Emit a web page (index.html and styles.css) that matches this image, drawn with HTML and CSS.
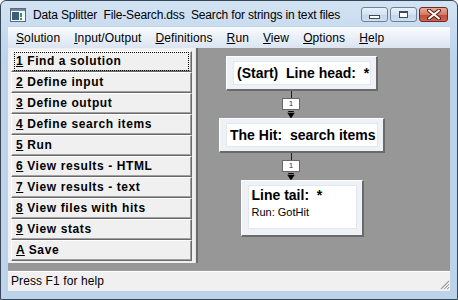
FILE: index.html
```html
<!DOCTYPE html>
<html lang="en">
<head>
  <meta charset="UTF-8">
  <title>Data Splitter</title>
  <link rel="stylesheet" href="styles.css">
</head>
<body>

  <div class="window">
    <div class="titlebar">
      <svg class="app-icon" width="16" height="14" viewBox="0 0 16 14">
        <rect x="0.5" y="0.5" width="15" height="13" fill="#f4f6f8" stroke="#5a6878"/>
        <rect x="1" y="1" width="14" height="2" fill="#6d86a6"/>
        <rect x="2" y="4" width="7" height="8" fill="#3f5b7c"/>
        <rect x="10" y="5" width="2" height="4" fill="#2f9a4a"/>
        <rect x="10" y="10" width="2" height="2" fill="#2f9a4a"/>
      </svg>
      <span class="title">Data Splitter&nbsp; File-Search.dss&nbsp; Search for strings in text files</span>
      <div class="caption-btns">
        <span class="cbtn"><span class="glyph-min"></span></span>
        <span class="cbtn"><span class="glyph-max"></span></span>
        <span class="cbtn close">
          <svg width="16" height="11" viewBox="0 0 16 11">
            <path d="M3 1.5 L13 9.5 M13 1.5 L3 9.5" stroke="#5a1d16" stroke-width="4" stroke-linecap="round"/>
            <path d="M3 1.5 L13 9.5 M13 1.5 L3 9.5" stroke="#ffffff" stroke-width="2" stroke-linecap="round"/>
          </svg>
        </span>
      </div>
    </div>

    <div class="menubar">
      <span class="menu"><u>S</u>olution</span>
      <span class="menu"><u>I</u>nput/Output</span>
      <span class="menu"><u>D</u>efinitions</span>
      <span class="menu"><u>R</u>un</span>
      <span class="menu"><u>V</u>iew</span>
      <span class="menu"><u>O</u>ptions</span>
      <span class="menu"><u>H</u>elp</span>
    </div>

    <div class="client">
      <div class="main">
        <div class="panel">
          <button class="step"><span class="focus-ring"><u>1</u> Find a solution</span></button>
          <button class="step"><span><u>2</u> Define input</span></button>
          <button class="step"><span><u>3</u> Define output</span></button>
          <button class="step"><span><u>4</u> Define search items</span></button>
          <button class="step"><span><u>5</u> Run</span></button>
          <button class="step"><span><u>6</u> View results - HTML</span></button>
          <button class="step"><span><u>7</u> View results - text</span></button>
          <button class="step"><span><u>8</u> View files with hits</span></button>
          <button class="step"><span><u>9</u> View stats</span></button>
          <button class="step"><span><u>A</u> Save</span></button>
        </div>

        <div class="canvas">
          <div class="flow">
            <div class="node node-head">
              <div class="node-inner">(Start)&nbsp; Line head:&nbsp; *</div>
            </div>

            <div class="link">
              <span class="link-line"></span>
              <span class="link-label">1</span>
              <svg class="link-arrow" width="8" height="8" viewBox="0 0 8 8">
                <rect x="1" y="0" width="6" height="1" fill="#000"/>
                <polygon points="0,2 8,2 4,8" fill="#000"/>
              </svg>
            </div>

            <div class="node node-hit">
              <div class="node-inner">The Hit:&nbsp; search items</div>
            </div>

            <div class="link">
              <span class="link-line"></span>
              <span class="link-label">1</span>
              <svg class="link-arrow" width="8" height="8" viewBox="0 0 8 8">
                <rect x="1" y="0" width="6" height="1" fill="#000"/>
                <polygon points="0,2 8,2 4,8" fill="#000"/>
              </svg>
            </div>

            <div class="node node-tail">
              <div class="node-inner">
                <div>Line tail:&nbsp; *</div>
                <div class="node-note">Run: GotHit</div>
              </div>
            </div>
          </div>
        </div>
      </div>

      <div class="statusbar">
        <span>Press F1 for help</span>
        <svg class="grip" width="12" height="12" viewBox="0 0 12 12">
          <path d="M11 3 L3 11 M11 6 L6 11 M11 9 L9 11" stroke="#a0a0a0" stroke-width="1.2"/>
          <path d="M12 4 L4 12 M12 7 L7 12 M12 10 L10 12" stroke="#ffffff" stroke-width="1"/>
        </svg>
      </div>
    </div>
  </div>

</body>
</html>
```

FILE: styles.css
```css
body {
  margin: 0;
  background: #ffffff;
}
.window {
  width: 458px;
  height: 300px;
  box-sizing: border-box;
  border: 1px solid #37475a;
  border-radius: 6px 6px 0 0;
  background: linear-gradient(#d3e3f4, #bcd3ea 60px);
  padding: 0 7px 8px 7px;
  display: flex;
  flex-direction: column;
  font-family: "Liberation Sans", Arial, sans-serif;
}

/* title bar */
.titlebar {
  height: 25px;
  display: flex;
  align-items: center;
  padding-left: 2px;
}
.app-icon {
  margin-right: 7px;
  margin-top: 2px;
}
.title {
  font-size: 12px;
  letter-spacing: -0.15px;
  color: #000;
  margin-top: 2px;
  white-space: nowrap;
}
.caption-btns {
  margin-left: auto;
  display: flex;
  gap: 2px;
  margin-top: 1px;
  margin-right: 2px;
}
.cbtn {
  width: 27px;
  height: 15px;
  box-sizing: border-box;
  border: 1px solid #6f8197;
  border-radius: 3px;
  background: linear-gradient(#e9f1fa, #d3e1f1 50%, #c3d5ea 51%, #cfdff0);
  display: flex;
  align-items: center;
  justify-content: center;
}
.cbtn.close {
  width: 29px;
  border-color: #6b2b22;
  background: linear-gradient(#e9a996, #d47a66 50%, #c14a38 51%, #d0654f);
}
.glyph-min {
  width: 9px;
  height: 2px;
  border: 1px solid #3d4b5c;
  background: #fff;
  margin-top: 5px;
}
.glyph-max {
  width: 7px;
  height: 4px;
  border: 1px solid #3d4b5c;
  border-top-width: 2px;
  background: #fff;
}

/* menu */
.menubar {
  height: 21px;
  display: flex;
  align-items: center;
  background: linear-gradient(#fafcfe, #e6edf6 60%, #dbe4f0);
  border-top: 1px solid #c6d3e2;
  padding-left: 1px;
}
.menu {
  font-size: 12px;
  letter-spacing: 0.1px;
  color: #000;
  padding: 0 7px;
}

/* client area */
.client {
  flex: 1;
  display: flex;
  flex-direction: column;
}
.main {
  flex: 1;
  display: flex;
  background: #979797;
}
.panel {
  width: 184px;
  align-self: flex-start;
  background: #f0f0f0;
  padding: 3px 0 2px 3px;
  border-right: 1px solid #e3e3e3;
  box-shadow: 2px 0 0 #6c6c6c;
  margin-right: 2px;
  display: flex;
  flex-direction: column;
}
.step {
  height: 21px;
  width: 181px;
  box-sizing: border-box;
  margin: 0;
  padding: 0 0 0 3px;
  background: #f0f0f0;
  border: 1px solid;
  border-color: #ffffff #696969 #696969 #ffffff;
  box-shadow: inset -1px -1px 0 #a0a0a0;
  text-align: left;
  font-family: "Liberation Sans", Arial, sans-serif;
  font-weight: bold;
  font-size: 12px;
  letter-spacing: 0.6px;
  color: #000;
  white-space: nowrap;
}
.step span {
  display: block;
  padding: 1px 0 2px 1px;
}
.step .focus-ring {
  outline: 1px dotted #000;
  outline-offset: 0;
  margin-right: 3px;
}

/* diagram */
.canvas {
  flex: 1;
}
.flow {
  width: 166px;
  margin-left: 21px;
  padding-top: 8px;
  display: flex;
  flex-direction: column;
  align-items: center;
}
.node {
  box-sizing: border-box;
  background: #eef2f7;
  border-top: 1px solid #ffffff;
  border-left: 1px solid #ffffff;
  border-right: 2px solid #6a6a6a;
  border-bottom: 2px solid #6a6a6a;
  padding: 4px 5px 5px 6px;
}
.node-inner {
  background: #ffffff;
  border: 1px solid #e2e7ee;
  font-weight: bold;
  font-size: 14px;
  color: #000;
  padding: 0 0 0 3px;
  box-sizing: border-box;
  white-space: nowrap;
}
.node-head {
  width: 152px;
  height: 35px;
}
.node-head .node-inner,
.node-hit .node-inner {
  height: 24px;
  line-height: 22px;
}
.node-hit {
  width: 166px;
  height: 35px;
}
.node-tail {
  width: 123px;
  height: 57px;
}
.node-tail .node-inner {
  height: 44px;
  line-height: 17px;
  padding-top: 1px;
}
.node-note {
  font-weight: normal;
  font-size: 11px;
  line-height: 16px;
}
.link {
  width: 18px;
  height: 27px;
  margin-right: 22px;
  display: flex;
  flex-direction: column;
  align-items: center;
}
.link-line {
  width: 1px;
  height: 7px;
  background: #0000ff;
}
.link-label {
  width: 18px;
  height: 12px;
  box-sizing: border-box;
  border: 1px solid #686868;
  background: #fff;
  font-size: 8px;
  line-height: 10px;
  text-align: center;
  color: #1c2c7a;
}
.link-arrow {
  margin-top: 1px;
}

/* status bar */
.statusbar {
  height: 21px;
  box-sizing: border-box;
  border-top: 1px solid #a0a0a0;
  box-shadow: inset 0 1px 0 #ffffff;
  background: #f0f0f0;
  display: flex;
  align-items: center;
  padding-left: 3px;
  font-size: 12px;
  letter-spacing: 0.1px;
  color: #000;
}
.grip {
  margin-left: auto;
  align-self: flex-end;
  margin-bottom: 1px;
}
```
